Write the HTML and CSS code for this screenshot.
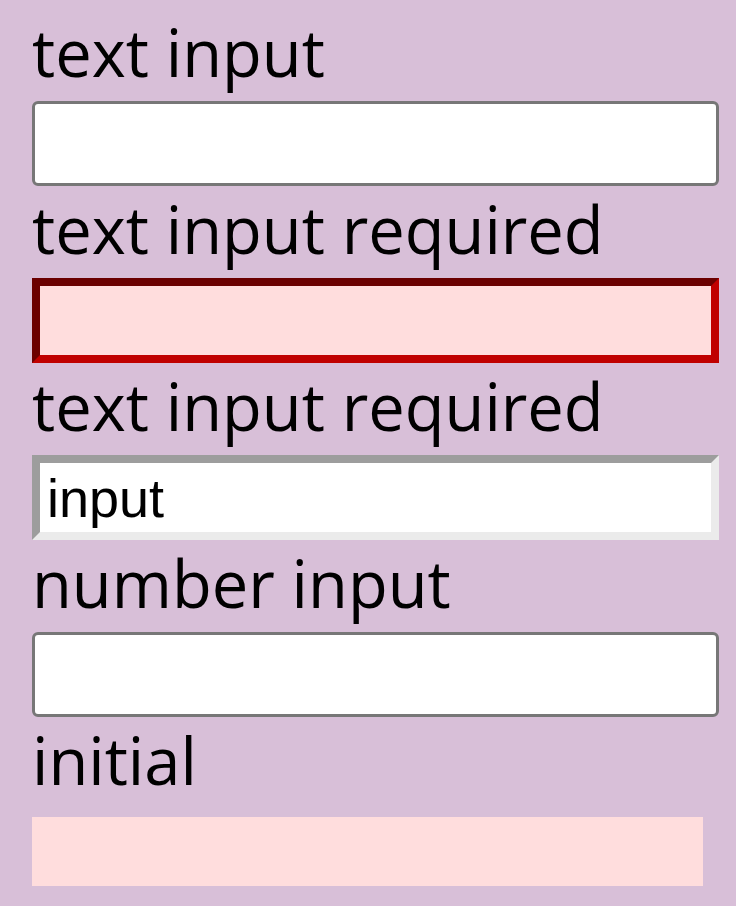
FILE: index.html
```html
<!DOCTYPE html>
<html lang="en">
<head>
    <meta charset="UTF-8">
    <meta name="viewport" content="width=device-width, initial-scale=1.0">
    <title>Input Styles</title>
    <link rel="stylesheet" href="styles.css">
</head>
<body>
    <form class="input-form">
        <label class="field-label" for="textInput">text input</label>
        <input class="field field-plain" type="text" id="textInput" name="textInput">

        <label class="field-label" for="requiredInput">text input required</label>
        <input class="field field-invalid" type="text" id="requiredInput" name="requiredInput" required>

        <label class="field-label" for="filledInput">text input required</label>
        <input class="field field-valid" type="text" id="filledInput" name="filledInput" value="input" required>

        <label class="field-label" for="numberInput">number input</label>
        <input class="field field-plain" type="number" id="numberInput" name="numberInput">

        <label class="field-label" for="initialInput">initial</label>
        <input class="field-initial" type="text" id="initialInput" name="initialInput">
    </form>
</body>
</html>
```

FILE: styles.css
```css
body {
    margin: 0;
    background-color: #d8bfd8;
}
.input-form {
    display: flex;
    flex-direction: column;
    align-items: flex-start;
    padding: 9px 0 0 32px;
}
.field-label {
    display: block;
    height: 92px;
    font-family: 'Open Sans', sans-serif;
    font-size: 65px;
    line-height: 86px;
    color: #000000;
}
.field {
    box-sizing: border-box;
    width: 687px;
    height: 85px;
    margin: 0;
    padding: 0 7px;
    font-family: 'Liberation Sans', Arial, sans-serif;
    font-size: 54px;
    color: #000000;
    outline: none;
}
.field-plain {
    background-color: #ffffff;
    border: 3px solid #777777;
    border-radius: 6px;
}
.field-invalid {
    background-color: #ffdddd;
    border: 8px solid;
    border-color: #6b0000 #c00000 #c00000 #6b0000;
}
.field-valid {
    background-color: #ffffff;
    border: 8px solid;
    border-color: #9d9d9d #ebebeb #ebebeb #9d9d9d;
}
.field-initial {
    box-sizing: border-box;
    width: 671px;
    height: 69px;
    margin: 8px 0 0;
    padding: 0;
    border: none;
    background-color: #ffdddd;
    outline: none;
}
```
